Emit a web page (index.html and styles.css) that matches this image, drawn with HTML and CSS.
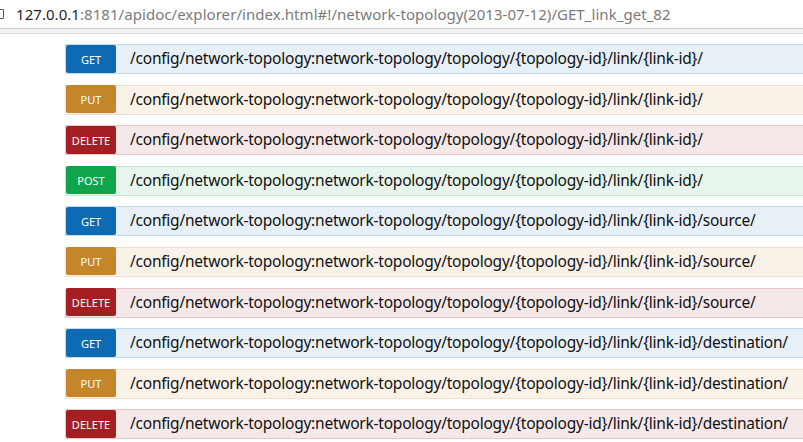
FILE: index.html
```html
<!DOCTYPE html>
<html>
<head>
<meta charset="utf-8">
<link rel="stylesheet" href="styles.css">
</head>
<body>
<div class="urlbar">
  <span class="lock"></span>
  <span class="url"><span class="host">127.0.0.1</span>:8181/apidoc/explorer/index.html#!/network-topology(2013-07-12)/GET_link_get_82</span>
</div>
<div class="urlrule"></div>
<ul class="ops">
  <li class="op get"><span class="method">GET</span><span class="path">/config/network-topology:network-topology/topology/{topology-id}/link/{link-id}/</span></li>
  <li class="op put"><span class="method">PUT</span><span class="path">/config/network-topology:network-topology/topology/{topology-id}/link/{link-id}/</span></li>
  <li class="op delete"><span class="method">DELETE</span><span class="path">/config/network-topology:network-topology/topology/{topology-id}/link/{link-id}/</span></li>
  <li class="op post"><span class="method">POST</span><span class="path">/config/network-topology:network-topology/topology/{topology-id}/link/{link-id}/</span></li>
  <li class="op get"><span class="method">GET</span><span class="path">/config/network-topology:network-topology/topology/{topology-id}/link/{link-id}/source/</span></li>
  <li class="op put"><span class="method">PUT</span><span class="path">/config/network-topology:network-topology/topology/{topology-id}/link/{link-id}/source/</span></li>
  <li class="op delete"><span class="method">DELETE</span><span class="path">/config/network-topology:network-topology/topology/{topology-id}/link/{link-id}/source/</span></li>
  <li class="op get"><span class="method">GET</span><span class="path">/config/network-topology:network-topology/topology/{topology-id}/link/{link-id}/destination/</span></li>
  <li class="op put"><span class="method">PUT</span><span class="path">/config/network-topology:network-topology/topology/{topology-id}/link/{link-id}/destination/</span></li>
  <li class="op delete"><span class="method">DELETE</span><span class="path">/config/network-topology:network-topology/topology/{topology-id}/link/{link-id}/destination/</span></li>
</ul>
</body>
</html>
```
FILE: styles.css
```css
html, body {
  margin: 0;
  padding: 0;
  background: #ffffff;
  overflow: hidden;
}
body {
  width: 803px;
  height: 442px;
  font-family: "Noto Sans", "DejaVu Sans", sans-serif;
}
.urlbar {
  height: 28px;
  display: flex;
  align-items: center;
  border-bottom: 1px solid #c9c9c9;
  white-space: nowrap;
}
.lock {
  width: 9px;
  height: 10px;
  margin-left: -5px;
  margin-right: 12px;
  border: 1.5px solid #555;
  border-radius: 1px;
  box-sizing: border-box;
}
.url {
  font-size: 15px;
  letter-spacing: 0.05px;
  color: #7b7b7b;
}
.host {
  color: #1f1f1f;
}
.urlrule {
  height: 4px;
  background: #f1f1f1;
  border-bottom: 1px solid #dcdcdc;
}
.ops {
  list-style: none;
  margin: 10px 0 0 65px;
  padding: 0;
}
.op {
  display: flex;
  align-items: center;
  height: 28px;
  border: 1px solid;
  border-right: none;
  margin-bottom: 10.6px;
  white-space: nowrap;
}
.method {
  width: 50px;
  height: 28px;
  line-height: 29px;
  border-radius: 2px;
  color: #fff;
  font-size: 11px;
  text-align: center;
  flex: none;
  margin-top: -1px;
}
.path {
  padding-left: 14px;
  font-size: 15.5px;
  letter-spacing: -0.23px;
  color: #111;
  margin-top: -2px;
}
.get { background: #e7f0f7; border-color: #c3d9ec; }
.get .method { background: #0f6ab4; }
.put { background: #f9f2e9; border-color: #f0e0ca; }
.put .method { background: #c5862b; }
.delete { background: #f5e8e8; border-color: #e8c6c7; }
.delete .method { background: #a41e22; }
.post { background: #e7f6ec; border-color: #c3e8d1; }
.post .method { background: #10a54a; }
```
